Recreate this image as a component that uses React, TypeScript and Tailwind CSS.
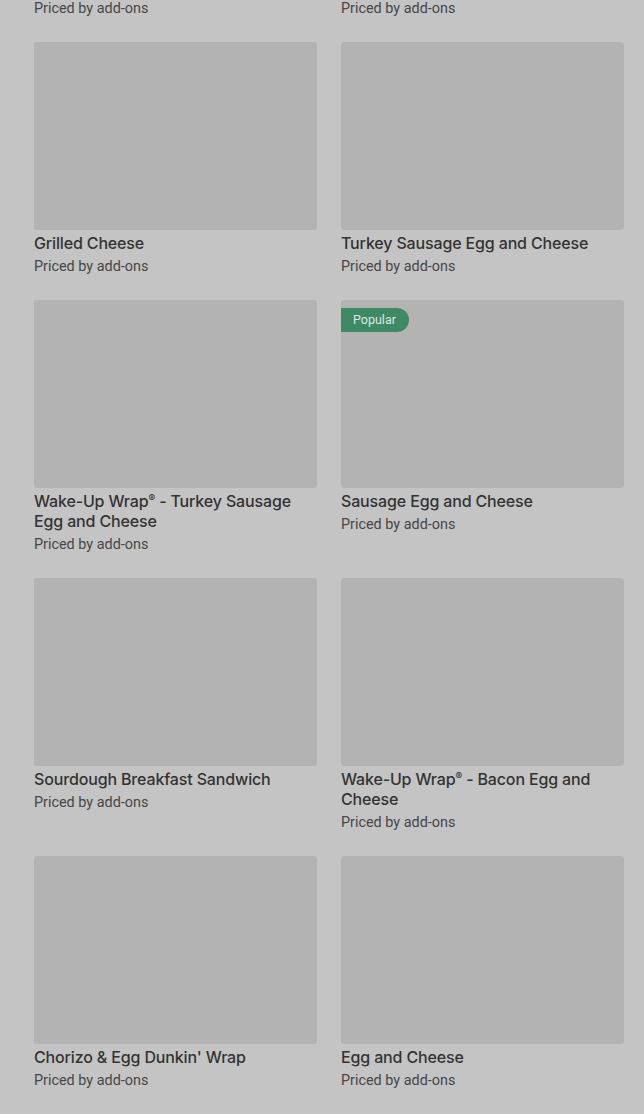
const ITEMS: { name: string; popular?: boolean }[] = [
  { name: "Bacon Egg and Cheese" },
  { name: "Veggie Egg White" },
  { name: "Grilled Cheese" },
  { name: "Turkey Sausage Egg and Cheese" },
  { name: "Wake-Up Wrap® - Turkey Sausage Egg and Cheese" },
  { name: "Sausage Egg and Cheese", popular: true },
  { name: "Sourdough Breakfast Sandwich" },
  { name: "Wake-Up Wrap® - Bacon Egg and Cheese" },
  { name: "Chorizo & Egg Dunkin' Wrap" },
  { name: "Egg and Cheese" },
  { name: "Power Breakfast Sandwich" },
  { name: "Wake-Up Wrap® - Egg and Cheese" },
];

// the ® in the menu names sits small and raised
function ItemName({ name }: { name: string }) {
  const parts = name.split("®");
  return (
    <>
      {parts.map((p, i) => (
        <span key={i}>
          {p}
          {i < parts.length - 1 && <span className="relative -top-[5px] text-[10px] leading-none">®</span>}
        </span>
      ))}
    </>
  );
}

function ItemCard({ name, popular }: { name: string; popular?: boolean }) {
  return (
    <div className="flex flex-col">
      <div className="relative h-[188px] rounded-[3px] bg-[#b3b3b3]">
        {popular && (
          <span className="absolute left-0 top-[8px] flex h-[24px] items-center rounded-r-full bg-[#3e8a63] pl-[12px] pr-[13px] font-['Roboto'] text-[12.5px] text-[#dce9e1]">
            Popular
          </span>
        )}
      </div>
      <h3 className="mt-[3px] text-[16px] font-medium leading-[20px] tracking-[-0.15px] text-[#333333]">
        <ItemName name={name} />
      </h3>
      <p className="mt-[4px] font-['Roboto'] text-[14.4px] leading-[20px] text-[#474747]">Priced by add-ons</p>
    </div>
  );
}

export default function App() {
  return (
    <div
      className="h-[1114px] overflow-hidden bg-[#c4c4c4] pl-[34px] pr-[20px]"
      style={{ fontFamily: "Inter, 'Noto Sans', sans-serif" }}
    >
      <div className="mt-[-216px] grid grid-cols-2 gap-x-[24px] gap-y-[23px]">
        {ITEMS.map((item, i) => (
          <ItemCard key={i} name={item.name} popular={item.popular} />
        ))}
      </div>
    </div>
  );
}
